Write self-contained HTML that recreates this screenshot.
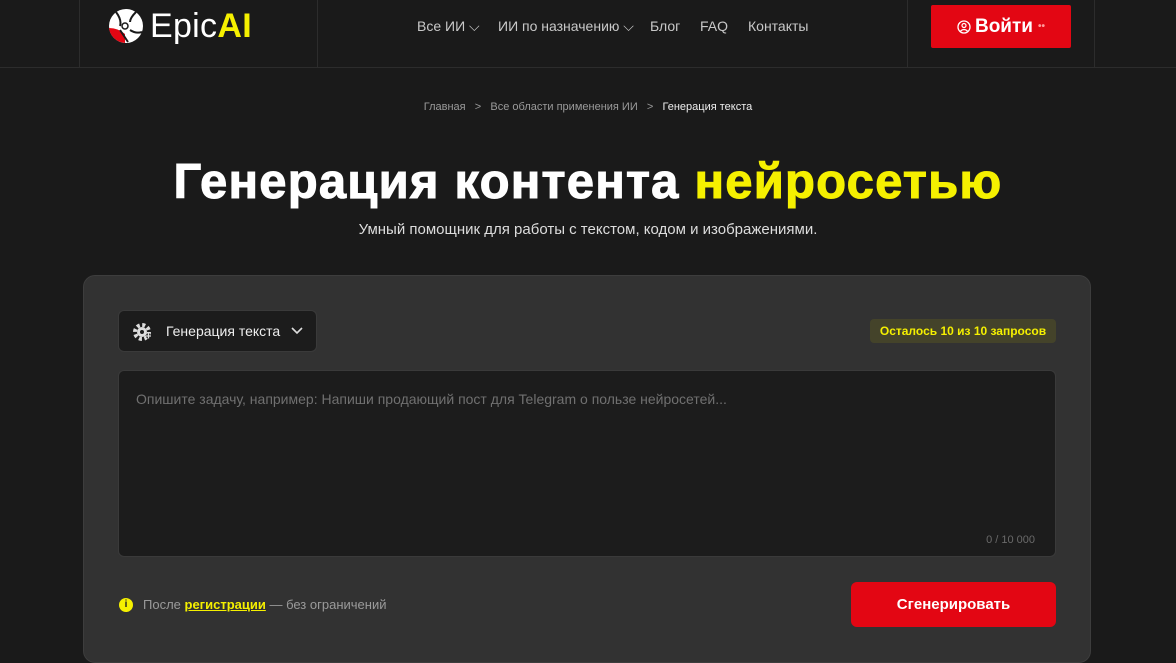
<!DOCTYPE html>
<html><head><meta charset="utf-8"><style>
*{box-sizing:border-box;margin:0;padding:0}
body{width:1176px;height:663px;overflow:hidden;background:#1a1a1a;font-family:"Liberation Sans",sans-serif;color:#fff;position:relative}
.hdr{position:absolute;left:0;top:0;width:1176px;height:68px;border-bottom:1px solid #2c2c2c}
.vl{position:absolute;top:0;height:67px;width:1px;background:#2c2c2c}
.nav{position:absolute;top:18px;font-size:14px;color:#c8c8c8}
.nav span{position:absolute;white-space:nowrap}
.btn{position:absolute;left:931px;top:5px;width:140px;height:43px;background:#e30613;border-radius:2px;font-weight:bold;font-size:19px;display:flex;align-items:center;justify-content:center}
.crumb{position:absolute;top:101px;left:0;width:1176px;text-align:center;font-size:11px;color:#9a9a9a}
h1{position:absolute;top:154px;left:0;width:1176px;text-align:center;font-size:49px;font-weight:bold;letter-spacing:1.2px;-webkit-text-stroke:1px currentColor}
.sub{position:absolute;top:221px;width:1176px;text-align:center;font-size:15px;color:#ddd}
.card{position:absolute;left:83px;top:275px;width:1008px;height:388px;background:#323232;border:1px solid #3d3d3d;border-radius:12px}
.sel{position:absolute;left:118px;top:310px;width:199px;height:42px;background:#1c1c1c;border:1px solid #3a3a3a;border-radius:6px;font-size:14px}
.badge{position:absolute;left:870px;top:319px;width:186px;height:24px;background:#44432a;border-radius:4px;color:#f5f000;font-weight:bold;font-size:12px;text-align:center;line-height:24px}
.ta{position:absolute;left:118px;top:370px;width:938px;height:187px;background:#1c1c1c;border:1px solid #3a3a3a;border-radius:6px}
.gen{position:absolute;left:851px;top:582px;width:205px;height:45px;background:#e30613;border-radius:6px;font-weight:bold;font-size:15px;text-align:center;line-height:45px}
</style></head><body>
<div class="hdr">
<div class="vl" style="left:79px"></div><div class="vl" style="left:317px"></div><div class="vl" style="left:907px"></div><div class="vl" style="left:1094px"></div>
<svg style="position:absolute;left:108px;top:8px" width="36" height="36" viewBox="0 0 36 36"><circle cx="18" cy="18" r="17" fill="#fff"/><path d="M1 20 A17 17 0 0 0 17 35 L17 26 Q10 20 1 20Z" fill="#e30613"/><path d="M8 4 Q14 12 12 18 M28 4 Q22 10 22 14 M22 22 Q28 26 34 24 M12 22 Q16 28 20 34" stroke="#1a1a1a" stroke-width="2" fill="none"/><circle cx="17" cy="18" r="3" fill="none" stroke="#1a1a1a" stroke-width="1.5"/></svg>
<div style="position:absolute;left:150px;top:7px;font-size:34px;letter-spacing:0.3px">Epic<span style="color:#f5f000;font-weight:bold">AI</span></div>
<div class="nav"><span style="left:417px">Все ИИ ⌵</span><span style="left:498px">ИИ по назначению ⌵</span><span style="left:650px">Блог</span><span style="left:700px">FAQ</span><span style="left:748px">Контакты</span></div>
<div class="btn"><svg width="14" height="14" viewBox="0 0 14 14" style="margin-right:4px"><circle cx="7" cy="7" r="6" fill="none" stroke="#fff" stroke-width="1.3"/><circle cx="7" cy="5.5" r="2" fill="none" stroke="#fff" stroke-width="1.2"/><path d="M3.5 11 Q7 8 10.5 11" stroke="#fff" stroke-width="1.2" fill="none"/></svg>Войти<span style="font-size:10px;color:#f99;margin-left:5px">••</span></div>
</div>
<div class="crumb">Главная &nbsp;&nbsp;&gt;&nbsp;&nbsp; Все области применения ИИ &nbsp;&nbsp;&gt;&nbsp;&nbsp; <span style="color:#eee">Генерация текста</span></div>
<h1>Генерация контента <span style="color:#f5f000">нейросетью</span></h1>
<div class="sub">Умный помощник для работы с текстом, кодом и изображениями.</div>
<div class="card"></div>
<div class="sel"><svg style="position:absolute;left:13px;top:11px" width="20" height="20" viewBox="0 0 20 20"><circle cx="10" cy="10" r="7" fill="none" stroke="#ddd" stroke-width="4" stroke-dasharray="3 2.5"/><circle cx="10" cy="10" r="5" fill="#ddd"/><circle cx="10" cy="10" r="2" fill="#1c1c1c"/><path d="M14 14h5M16.5 11.5v5" stroke="#1c1c1c" stroke-width="3"/><path d="M14 14h5M16.5 11.5v5" stroke="#ddd" stroke-width="1.3"/></svg><span style="position:absolute;left:47px;top:12px;color:#eee">Генерация текста</span><svg style="position:absolute;left:172px;top:16px" width="12" height="8" viewBox="0 0 12 8"><path d="M1 1l5 5 5-5" stroke="#ddd" stroke-width="1.6" fill="none"/></svg></div>
<div class="badge">Осталось 10 из 10 запросов</div>
<div class="ta"><div style="position:absolute;left:17px;top:20px;font-size:14px;color:#707070">Опишите задачу, например: Напиши продающий пост для Telegram о пользе нейросетей...</div><div style="position:absolute;right:20px;bottom:10px;font-size:11px;color:#6a6a6a">0 / 10 000</div></div>
<div style="position:absolute;left:119px;top:598px;width:14px;height:14px;border-radius:50%;background:#f5f000;color:#222;font-size:10px;font-weight:bold;text-align:center;line-height:14px">i</div>
<div style="position:absolute;left:143px;top:597px;font-size:13px;color:#9a9a9a">После <span style="color:#f5f000;font-weight:bold;text-decoration:underline">регистрации</span> — без ограничений</div>
<div class="gen">Сгенерировать</div>
</body></html>
